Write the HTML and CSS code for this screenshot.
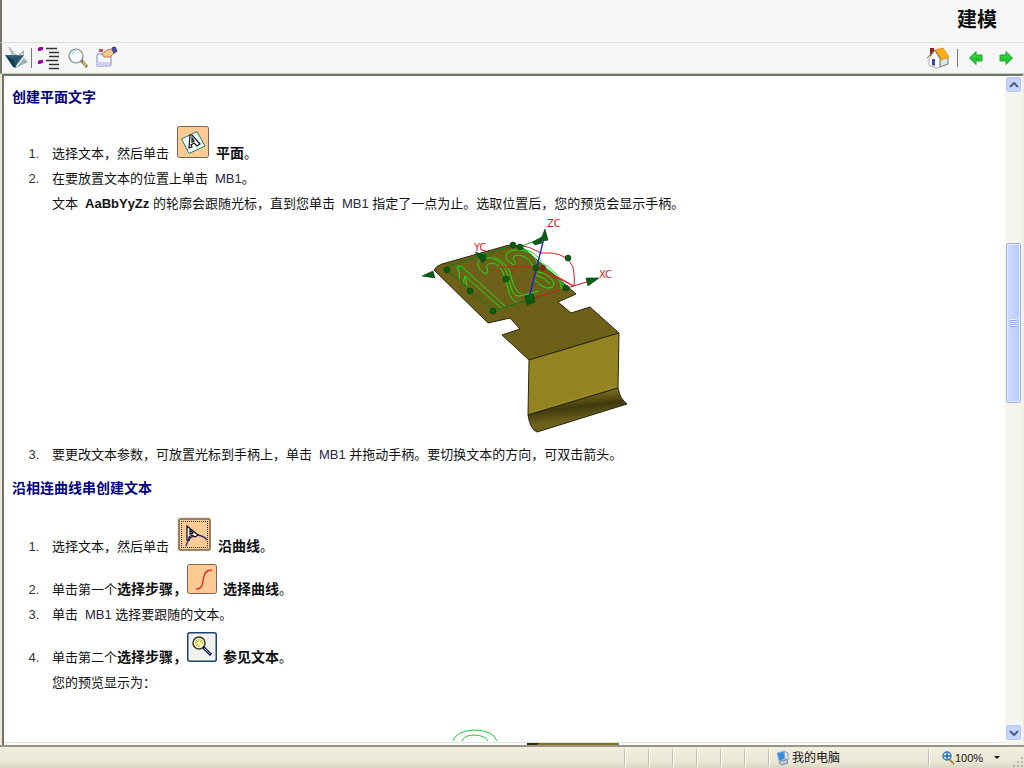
FILE: index.html
```html
<!DOCTYPE html>
<html lang="zh-CN">
<head>
<meta charset="utf-8">
<title>建模</title>
<link rel="stylesheet" href="styles.css">
</head>
<body>
<div class="window">
  <header class="banner"><h1>建模</h1></header>
  <nav class="toolbar" aria-label="工具栏">
    <div class="tools">
      <button class="tool logo" type="button" aria-label="主题"><svg width="26" height="26" viewBox="0 0 26 26"><path d="M4 2 13 12 10 14 7 10Z" fill="#c1cbcf" stroke="#9aa7ac" stroke-width=".7"/><path d="M0 10 13 10 10 21Z" fill="#2d687f"/><path d="M0 10 8 22 12 23 8 14Z" fill="#113b50"/><path d="M11 12 19 5 19 13 23 17 11 23Z" fill="#a3b0b6"/><path d="M13 12 18 8 19 13 11 23Z" fill="#e6edef"/><path d="M9 11 19 10 10 22Z" fill="#2b5568"/></svg></button>
      <span class="divider"></span>
      <button class="tool" type="button" aria-label="目录"><svg width="24" height="26" viewBox="0 0 24 26"><g fill="#a400a8"><path d="M2 2h4v3H4v1H1V3h1zM2 15h4v3H4v1H1v-3h1z"/></g><path d="M9 3.500H20M12 7.500H22M12 11.500H22M9 15.500H21M12 19.500H22M12 23.500H22" stroke="#333" stroke-width="1.500"/></svg></button>
      <button class="tool" type="button" aria-label="搜索"><svg width="24" height="26" viewBox="0 0 24 26"><path d="M15 15 21 22" stroke="#77756d" stroke-width="3"/><path d="M17 17 20 21" stroke="#f1bd50" stroke-width="2"/><circle cx="10" cy="11" r="7" fill="#f4fbfd" stroke="#7e8b8b" stroke-width="1.200"/><path d="M6 10Q6 6 11 6" fill="none" stroke="#bfe5ee" stroke-width="2"/></svg></button>
      <button class="tool" type="button" aria-label="书签"><svg width="24" height="26" viewBox="0 0 24 26"><path d="M3 9H9L11 11H16V20L15 21H2V10Z" fill="#f5f6ff" stroke="#8588c8"/><path d="M2 17H15V21H2Z" fill="#cdd0f7"/><path d="M4 4H8V7H4Z" fill="#d7445b"/><path d="M7 9 12 5 17 4 19 8 15 12 9 12Z" fill="#f3c78e" stroke="#ae8153"/><path d="M17 3 20 2 22 6 19 8Z" fill="#5055b5" stroke="#282c7d"/></svg></button>
    </div>
    <div class="tools end">
      <button class="tool" type="button" aria-label="主页"><svg width="24" height="24" viewBox="0 0 24 24"><path d="M4 2H8V9L4 12Z" fill="#8e2017"/><path d="M3 12 9 5 14 13V21L10 22 3 19Z" fill="#fff" stroke="#afafb5"/><path d="M14 14 22 11V18L14 21Z" fill="#dfe3e5" stroke="#777"/><path d="M9 4 17 2 23 11 15 14Z" fill="#ffaf17" stroke="#e19624"/><path d="M1 12 9 4 15 13" fill="none" stroke="#8c7456"/><path d="M6 13H9V20L6 19Z" fill="#4547b0"/></svg></button>
      <span class="divider"></span>
      <button class="tool" type="button" aria-label="后退"><svg width="16" height="16" viewBox="0 0 16 16"><path d="M1.500 8 8 1.500V5H14V11H8V14.500Z" fill="#1dc62d" stroke="#28a832"/><path d="M4 8 7 5V7H13" fill="none" stroke="#48d650"/></svg></button>
      <button class="tool" type="button" aria-label="前进"><svg width="16" height="16" viewBox="0 0 16 16"><path d="M14.500 8 8 1.500V5H2V11H8V14.500Z" fill="#1dc62d" stroke="#28a832"/><path d="M3 7H9V5L12 8" fill="none" stroke="#48d650"/></svg></button>
    </div>
  </nav>
  <div class="view">
    <main class="document">
      <h2>创建平面文字</h2>
      <ol>
        <li>选择文本，然后单击<svg class="icon" width="32" height="32" viewBox="0 0 32 32"><rect x=".5" y=".5" width="31" height="31" rx="2" fill="#ffcb94" stroke="#7b634e"/><path d="M4.500 13 20 5.500 28 20 12 27.500Z" fill="#f0ffff" stroke="#167b66"/><path d="M12 22 13 9 15 9 23 18 20 20 17 17 14 19 15 21ZM15 12V16L17 15Z" fill="#fff" fill-rule="evenodd" stroke="#111" stroke-width="1.200"/></svg><b>平面</b>。</li>
        <li>在要放置文本的位置上单击<span class="latin">MB1</span>。<br>文本<b class="sample">AaBbYyZz</b> 的轮廓会跟随光标，直到您单击<span class="latin">MB1</span> 指定了一点为止。选取位置后，您的预览会显示手柄。
          <svg class="model" width="216" height="226" viewBox="421 216 216 226" role="img" aria-label="平面文字预览">
            <defs><linearGradient id="bend" x1="0" y1="0" x2=".25" y2="1"><stop offset=".25" stop-color="#776b1c"/><stop offset=".52" stop-color="#40390d"/><stop offset=".8" stop-color="#6d611b"/></linearGradient></defs>
            <path d="M434 270Q436 266 442 264L502 247Q512 243 522 247L576 294 558 302 571 313 590 307 619 333 529 360 502 335 520 329 510 318 488 323Z" fill="#6d6019" stroke="#282512"/>
            <path d="M529 360 619 333 618 388 528 415Z" fill="#948421" stroke="#282512"/>
            <path d="M528 415 618 388Q620 399 627 404L537 432Q530 429 528 415Z" fill="url(#bend)" stroke="#282512"/>
            <path d="M529 413 617 386" stroke="#a19027"/>
            <g fill="none" stroke="#12e61a">
              <path d="M459 279Q461 273 457 267L461 266 505 306M501 308 465 276 467 286M465 276Q463 280 464 284"/>
              <path d="M486 274Q478 270 478 263 480 257 491 258 503 261 507 273L511 288Q514 297 520 296L539 291M486 274Q489 272 487 268 485 264 492 263 500 264 504 275L509 292Q511 300 517 302M494 257Q508 263 511 276 514 291 521 294"/>
              <path d="M512 264Q503 258 507 253 513 248 525 251 536 255 538 266 547 267 555 275 563 283 561 291M512 264Q516 266 515 262 511 258 516 255 527 255 532 264L534 270Q539 268 538 272 548 273 553 281 556 289 546 288 538 285 534 279M536 275Q544 277 550 284M517 248Q535 249 543 264 555 269 564 286"/>
              <path d="M446 267 509 247M493 311 567 288M447 270 493 310" stroke="#0d7c1b"/>
            </g>
            <g fill="none" stroke="#da1620"><path d="M519 245Q529 246 541 253H552Q568 255 573 267 575 279 574 286M536 268 574 286M498 267H543M567 288 590 281M530 299 567 288M553 275Q561 278 573 286"/></g>
            <path d="M520 247 532 242" stroke="#16a323"/>
            <path d="M529 298 544 238" stroke="#1919e6" stroke-width="1.300"/>
            <g fill="#075e12" stroke="#043c0b" stroke-width=".6"><path d="M422 276 433 271 435 278ZM545 229 548 240Q544 242 541 239ZM532 242 542 237 542 243 535 245ZM586 278 599 278 588 286ZM475 252 486 256 483 263Z"/><circle cx="447" cy="270" r="3"/><circle cx="483" cy="258" r="3"/><circle cx="513" cy="245" r="3"/><circle cx="520" cy="247" r="3"/><circle cx="568" cy="258" r="3"/><circle cx="506" cy="279" r="3"/><circle cx="470" cy="291" r="3"/><circle cx="493" cy="311" r="3"/><circle cx="566" cy="288" r="3"/><circle cx="536" cy="268" r="3"/><path d="M525 296 533 294 535 302 527 305Z"/></g>
            <circle cx="543" cy="268" r="3" fill="#852915"/>
            <g class="axis"><text x="474" y="251">YC</text><text x="547" y="227">ZC</text><text x="599" y="278">XC</text></g>
          </svg>
        </li>
        <li>要更改文本参数，可放置光标到手柄上，单击<span class="latin">MB1</span> 并拖动手柄。要切换文本的方向，可双击箭头。</li>
      </ol>
      <h2>沿相连曲线串创建文本</h2>
      <ol>
        <li>选择文本，然后单击<svg class="icon" width="34" height="34" viewBox="0 0 34 34"><path d="M0 0H34V34H0Z" fill="#ebe5d1"/><rect x="2" y="2" width="31" height="31" rx="2" fill="#ffcb94" stroke="#7b634e" stroke-width="1.500"/><path d="M4 4.500H31M4 30.500H31M4.500 4V31M30.500 4V31" fill="none" stroke="#3d3027" stroke-dasharray="1 1"/><path d="M9 29Q12 18 21 18 27 19 30 23" fill="none" stroke="#34317b" stroke-width="1.300"/><path d="M10 23V9L21 18 18 20 15 18 12 20V23ZM13 13V17L16 16Z" fill="#fff" fill-rule="evenodd" stroke="#171425" stroke-width="1.300"/></svg><b>沿曲线</b>。</li>
        <li>单击第一个<b>选择步骤，</b><svg class="icon tight" width="30" height="30" viewBox="0 0 30 30"><rect x=".5" y=".5" width="29" height="29" rx="2" fill="#ffcb94" stroke="#7b634e"/><path d="M9 25C17 25 15 18 17 12 18 8 20 6 25 6" fill="none" stroke="#e32417" stroke-width="1.300"/></svg><b>选择曲线</b>。</li>
        <li>单击<span class="latin">MB1</span> 选择要跟随的文本。</li>
        <li>单击第二个<b>选择步骤，</b><svg class="icon tight" width="30" height="30" viewBox="0 0 30 30"><rect x=".75" y=".75" width="28.500" height="28.500" rx="2" fill="#f2f3ed" stroke="#1c416b" stroke-width="1.500"/><circle cx="12" cy="11" r="6" fill="#fffbb6" stroke="#39372d" stroke-width="1.500"/><path d="M12 7V9M12 13V15M8 11H10M14 11H16M9 8 11 10M15 8 13 10M9 14 11 12" stroke="#a8a01e"/><path d="M16 15 24 23" stroke="#111747" stroke-width="3"/><path d="M17 16 23 22" stroke="#9ba1df"/></svg><b>参见文本</b>。<br>您的预览显示为：
          <svg class="model next" width="216" height="200" viewBox="421 729 216 200" role="img" aria-label="曲线文字预览"><g fill="none" stroke="#20c936"><path d="M453 741Q456 731 474 730 493 730 497 741M462 741Q464 735 475 735 486 736 488 741"/></g><path d="M527 743H619V760H527Z" fill="#807323"/><path d="M527 743H540L534 746H527Z" fill="#302c18"/></svg>
        </li>
      </ol>
    </main>
    <div class="scrollbar" aria-hidden="true">
      <button class="scroll-button" type="button" tabindex="-1"><svg width="10" height="8" viewBox="0 0 10 8"><path d="M1 6 5 2 9 6" fill="none" stroke="#4d6185" stroke-width="2"/></svg></button>
      <div class="track"><span class="before"></span><span class="thumb"><i class="ridges"></i></span><span class="after"></span></div>
      <button class="scroll-button" type="button" tabindex="-1"><svg width="10" height="8" viewBox="0 0 10 8"><path d="M1 2 5 6 9 2" fill="none" stroke="#4d6185" stroke-width="2"/></svg></button>
    </div>
  </div>
  <footer class="status">
    <span class="cell"></span><span class="cell"></span><span class="cell"></span><span class="cell"></span><span class="cell"></span><span class="cell"></span>
    <span class="place"><svg width="16" height="16" viewBox="0 0 16 16"><path d="M2 3 9 1 10 9 4 11Z" fill="#348de5" stroke="#a8bad2"/><path d="M9 1 13 3V10L10 9Z" fill="#dce5f0" stroke="#8ba0bb"/><path d="M5 11 12 10 13 13 7 15 4 13Z" fill="#bdcce2" stroke="#788fae"/></svg>我的电脑</span>
    <button class="zoom" type="button"><svg width="14" height="14" viewBox="0 0 14 14"><path d="M8 8 13 13" stroke="#b78150" stroke-width="2"/><circle cx="6" cy="5" r="4" fill="#e7f5ff" stroke="#3478b8" stroke-width="1.500"/><path d="M6 2V8M3 5H9" stroke="#1664b7" stroke-width="1.500"/></svg><span>100%</span><i class="caret"></i></button>
    <svg class="grip" width="12" height="12" viewBox="0 0 12 12"><path d="M9 1h2v2H9zM5 5h2v2H5zM9 5h2v2H9zM1 9h2v2H1zM5 9h2v2H5zM9 9h2v2H9z" fill="#b9b5a2"/></svg>
  </footer>
</div>
</body>
</html>
```
FILE: styles.css
```css
* { box-sizing: border-box; }
body {
  margin: 0;
  color: #111;
  background: #ece9d8;
  font: 13px/25px "Liberation Sans", "Noto Sans CJK SC", sans-serif;
}
button { margin: 0; padding: 0; border: 0; background: none; font: inherit; color: inherit; }
svg { display: block; }
.window { display: flex; flex-direction: column; height: 100vh; overflow: hidden; }
.banner {
  display: flex;
  flex: none;
  align-items: center;
  justify-content: flex-end;
  height: 43px;
  padding: 0 27px 2px;
  border-left: 2px solid #77736a;
  border-bottom: 1px solid #cfe6cf;
  background: #f6f6f6;
}
h1 { margin: 0; font-size: 20px; line-height: 28px; }
.toolbar {
  display: flex;
  flex: none;
  justify-content: space-between;
  height: 31px;
  padding: 0 10px 1px 3px;
  border-left: 2px solid #77736a;
  border-bottom: 1px solid #b9d8b9;
  background: #f6f6f6;
}
.tools { display: flex; align-items: center; gap: 5px; }
.tools .logo { margin-right: -5px; }
.tools.end { gap: 7px; }
.tools.end .tool + .tool { margin-left: 7px; }
.divider { width: 1px; height: 20px; background: #777; }
.end .divider { height: 18px; margin-right: 3px; }
.view {
  display: flex;
  flex: 1;
  min-height: 0;
  margin-left: 2px;
  border-top: 2px solid #77736a;
  border-left: 2px solid #77736a;
  border-right: 2px solid #f1efe2;
  background: #fff;
}
.document {
  flex: 1;
  min-width: 0;
  padding: 9px 0 0 8px;
  overflow: hidden;
  background: linear-gradient(#d3ead3, #d3ead3) 0 calc(100% - 2px) / 100% 1px no-repeat;
}
h2 { margin: 0; color: #000080; font-size: 14px; line-height: 25px; }
ol { margin: 10px 0 9px; padding-left: 31px; }
li { padding-left: 9px; }
li::marker { color: #333; }
b { font-size: 14px; line-height: 20px; }
.latin { margin-left: 7px; color: #29233f; }
.sample { margin-left: 7px; font-size: 13px; }
.icon { display: inline-block; margin: 6px 7px 0 8px; vertical-align: baseline; }
.icon.tight { margin: 5px 6px 0 0; }
.model { margin: 0 auto; }
.model.next { margin-top: 34px; }
.axis { fill: #cf1720; font: 10px "DejaVu Sans", sans-serif; }
.scrollbar {
  display: flex;
  flex: none;
  flex-direction: column;
  width: 17px;
  padding-bottom: 4px;
  background: #f5f4ee;
}
.scroll-button {
  display: grid;
  flex: none;
  place-items: center;
  height: 17px;
  border: 1px solid #fff;
  border-radius: 3px;
  background: #c5d5fc;
  box-shadow: inset 0 0 0 1px #b0c6f5;
}
.track { display: flex; flex: 1; flex-direction: column; }
.before { flex: 150; }
.thumb {
  display: grid;
  flex: 158;
  place-items: center;
  margin: 0 1px;
  border: 1px solid #9cb4ea;
  border-radius: 2px;
  background: linear-gradient(90deg, #cbdafe, #b9ccfa);
  box-shadow: inset 0 0 0 1px #e5edff;
}
.after { flex: 321; }
.ridges { width: 7px; height: 8px; background: repeating-linear-gradient(#eef4ff 0 1px, #8da9e4 1px 2px); }
.status {
  display: flex;
  flex: none;
  align-items: center;
  justify-content: flex-end;
  height: 23px;
  border-top: 2px solid #99958a;
  background: linear-gradient(#f1eede, #ebe7d6 70%, #dbd7c4);
  font-size: 12px;
  line-height: 20px;
}
.cell { width: 24px; height: 17px; border-left: 1px solid #c5c1ae; box-shadow: inset 1px 0 #fff; }
.place {
  display: flex;
  align-items: center;
  width: 160px;
  height: 17px;
  padding-left: 6px;
  border-left: 1px solid #c5c1ae;
  box-shadow: inset 1px 0 #fff;
}
.place svg { margin-right: 1px; }
.zoom {
  display: flex;
  align-items: center;
  width: 84px;
  height: 17px;
  padding-left: 12px;
  border-left: 1px solid #c5c1ae;
  box-shadow: inset 1px 0 #fff;
  font-size: 11px;
}
.caret { margin-left: 11px; border: 3px solid transparent; border-top-color: #111; border-bottom: 0; }
.grip { align-self: flex-end; }
```
